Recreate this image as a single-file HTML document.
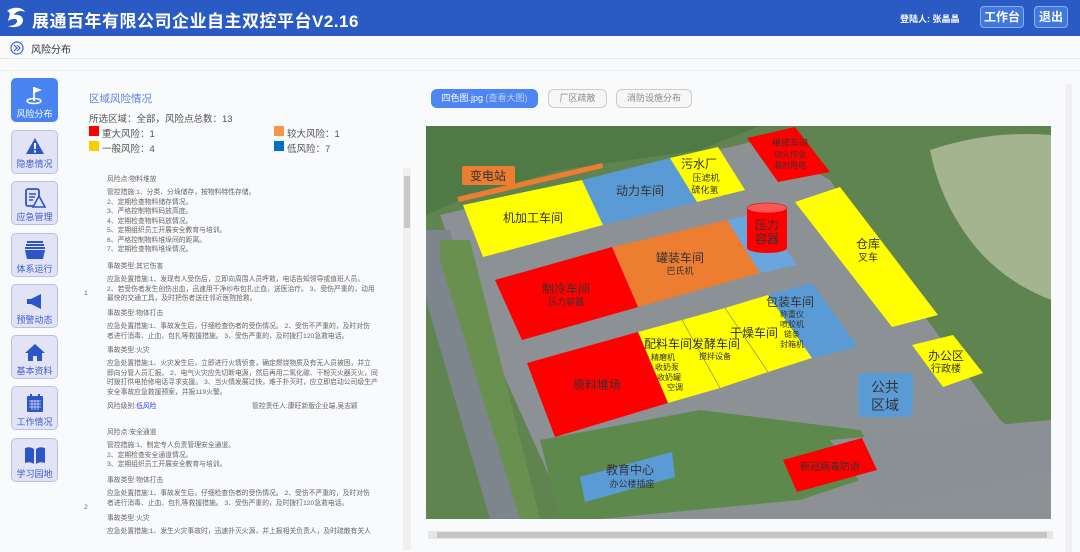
<!DOCTYPE html>
<html><head><meta charset="utf-8">
<style>
*{margin:0;padding:0;box-sizing:border-box}
body{width:1080px;height:552px;overflow:hidden;background:#f9fafc;font-family:"Liberation Sans","Noto Sans CJK SC",sans-serif;position:relative;color:#555}
.hdr{position:absolute;left:0;top:0;width:1080px;height:36px;background:#2a5bc5}
.title{position:absolute;left:32px;top:7px;color:#fff;font-size:17px;font-weight:bold;letter-spacing:0.5px}
.hb{position:absolute;top:6px;height:22px;border:1px solid #8fb0f5;border-radius:4px;background:#4177e0;color:#fff;font-size:12px;line-height:20px;text-align:center;font-weight:bold}
.side{position:absolute;left:11px;width:47px;height:44px;border-radius:5px;background:#e2e4f6;border:1px solid #b9c0e8;text-align:center;color:#3a5ed0;font-size:9px}
.side.on{background:#4a84f2;border-color:#4a84f2;color:#fff}
.side svg{display:block;margin:6px auto 2px}
.t{position:absolute;font-size:6.8px;color:#666;line-height:9.5px;white-space:nowrap}
.btn{position:absolute;top:89px;height:19px;border:1px solid #ccc;border-radius:6px;font-size:9px;color:#888;line-height:17px;text-align:center;background:#f6f6f6}
.sw{position:absolute;width:10px;height:10px}
.lg{position:absolute;font-size:9.5px;color:#555}
</style></head><body>
<div class="hdr"></div>
<svg style="position:absolute;left:3px;top:5px" width="26" height="26" viewBox="0 0 26 26"><path d="M4 6 C10 1 20 2 22 7 C18 5 13 6 11 10 C15 9 20 11 20 15 C20 21 12 24 5 21 C10 21 15 19 14 15 C12 13 8 14 5 16 C6 11 9 8 4 6Z" fill="#fff"/></svg>
<div class="title">展通百年有限公司企业自主双控平台V2.16</div>
<div style="position:absolute;left:900px;top:12px;color:#fff;font-size:9px;font-weight:bold">登陆人: 张晶晶</div>
<div class="hb" style="left:980px;width:44px">工作台</div>
<div class="hb" style="left:1034px;width:34px">退出</div>

<svg style="position:absolute;left:10px;top:41px" width="14" height="14"><circle cx="7" cy="7" r="6" fill="none" stroke="#3a63c8" stroke-width="1.2"/><path d="M4 4l3 3-3 3M7 4l3 3-3 3" fill="none" stroke="#3a63c8" stroke-width="1.2"/></svg>
<div style="position:absolute;left:31px;top:41px;font-size:10px;color:#333">风险分布</div>
<div style="position:absolute;left:0;top:58px;width:1080px;border-top:1px dotted #cfd6e6"></div>
<div style="position:absolute;left:0;top:70px;width:1080px;border-top:1px dotted #dde2ee"></div>

<div class="side on" style="top:78px"><svg width="20" height="20" viewBox="0 0 20 20"><path d="M9 2v14" stroke="#fff" stroke-width="1.8"/><path d="M9 2l8 3-8 3z" fill="#fff"/><ellipse cx="9" cy="16" rx="7" ry="2.5" fill="none" stroke="#fff" stroke-width="1.5"/></svg>风险分布</div>
<div class="side" style="top:130px"><svg width="20" height="18" viewBox="0 0 20 18"><path d="M10 1L19 17H1z" fill="#2c55c8"/><rect x="9" y="6" width="2" height="6" fill="#fff"/><rect x="9" y="13.5" width="2" height="2" fill="#fff"/></svg>隐患情况</div>
<div class="side" style="top:181px"><svg width="22" height="20" viewBox="0 0 22 20"><rect x="2" y="1" width="13" height="17" rx="2" fill="none" stroke="#2c55c8" stroke-width="1.8"/><path d="M5 6h7M5 9h6M5 12h4" stroke="#2c55c8" stroke-width="1.5"/><path d="M15 8l6 11H9z" fill="#e2e4f6" stroke="#2c55c8" stroke-width="1.6"/></svg>应急管理</div>
<div class="side" style="top:233px"><svg width="22" height="20" viewBox="0 0 22 20"><rect x="3" y="1" width="16" height="2" fill="#2c55c8"/><rect x="2" y="4" width="18" height="2" fill="#2c55c8"/><rect x="1" y="7" width="20" height="2" fill="#2c55c8"/><path d="M1 10h20l-2 9H3z" fill="#2c55c8"/></svg>体系运行</div>
<div class="side" style="top:284px"><svg width="22" height="20" viewBox="0 0 22 20"><rect x="3" y="8" width="4" height="5" fill="#2c55c8"/><path d="M7 8l10-5v15l-10-5z" fill="#2c55c8"/></svg>预警动态</div>
<div class="side" style="top:335px"><svg width="22" height="20" viewBox="0 0 22 20"><path d="M11 2L1 11h3v8h5v-5h4v5h5v-8h3z" fill="#2c55c8"/></svg>基本资料</div>
<div class="side" style="top:386px"><svg width="22" height="20" viewBox="0 0 22 20"><rect x="3" y="3" width="16" height="16" rx="1" fill="#2c55c8"/><rect x="6" y="1" width="2" height="4" fill="#2c55c8"/><rect x="14" y="1" width="2" height="4" fill="#2c55c8"/><path d="M5 8h12M5 11h12M5 14h12M8 7v10M11 7v10M14 7v10" stroke="#e2e4f6" stroke-width="0.8"/></svg>工作情况</div>
<div class="side" style="top:438px"><svg width="22" height="20" viewBox="0 0 22 20"><path d="M1 3q5-2 9 1v15q-4-3-9-1z M21 3q-5-2-9 1v15q4-3 9-1z" fill="#2c55c8"/></svg>学习园地</div>

<div style="position:absolute;left:89px;top:91px;font-size:10.5px;color:#5b84e8">区域风险情况</div>
<div class="lg" style="left:89px;top:111px">所选区域：全部，风险点总数：13</div>
<div class="sw" style="left:89px;top:126px;background:#f00"></div><div class="lg" style="left:102px;top:126px">重大风险：1</div>
<div class="sw" style="left:274px;top:126px;background:#f79646"></div><div class="lg" style="left:287px;top:126px">较大风险：1</div>
<div class="sw" style="left:89px;top:141px;background:#fc0"></div><div class="lg" style="left:102px;top:141px">一般风险：4</div>
<div class="sw" style="left:274px;top:141px;background:#0070c0"></div><div class="lg" style="left:287px;top:141px">低风险：7</div>

<div class="t" style="left:107px;top:175px">风险点:物料堆放</div>
<div class="t" style="left:107px;top:188px">管控措施:1、分类、分垛储存，按物料特性存储。<br>2、定期检查物料储存情况。<br>3、严格控制物料码放高度。<br>4、定期检查物料码放情况。<br>5、定期组织员工开展安全教育与培训。<br>6、严格控制物料堆垛间的距离。<br>7、定期检查物料堆垛情况。</div>
<div class="t" style="left:107px;top:262px">事故类型:其它伤害</div>
<div class="t" style="left:107px;top:275px">应急处置措施:1、发现有人受伤后，立即向周围人员呼救，电话告知领导或值班人员。<br>2、若受伤者发生创伤出血，迅速用干净纱布包扎止血，送医治疗。 3、受伤严重的，动用<br>最快的交通工具，及时把伤者送往邻近医院抢救。</div>
<div class="t" style="left:84px;top:289px">1</div>
<div class="t" style="left:107px;top:309px">事故类型:物体打击</div>
<div class="t" style="left:107px;top:322px">应急处置措施:1、事故发生后，仔细检查伤者的受伤情况。 2、受伤不严重的，及时对伤<br>者进行消毒、止血、包扎等救援措施。 3、受伤严重的，及时拨打120急救电话。</div>
<div class="t" style="left:107px;top:346px">事故类型:火灾</div>
<div class="t" style="left:107px;top:359px">应急处置措施:1、火灾发生后，立即进行火情侦查，确定燃烧物质及有无人员被困，并立<br>即向分管人员汇报。 2、电气火灾应先切断电源，然后再用二氧化碳、干粉灭火器灭火，同<br>时拨打供电抢修电话寻求支援。 3、当火情发展过快，难于扑灭时，应立即启动公司级生产<br>安全事故应急救援预案，并报119火警。</div>
<div class="t" style="left:107px;top:402px">风险级别:<span style="color:#2a40ff">低风险</span></div>
<div class="t" style="left:252px;top:402px">管控责任人:康旺新版企业端,吴志颖</div>
<div class="t" style="left:107px;top:428px">风险点:安全通道</div>
<div class="t" style="left:107px;top:441px">管控措施:1、制定专人负责管理安全通道。<br>2、定期检查安全通道情况。<br>3、定期组织员工开展安全教育与培训。</div>
<div class="t" style="left:107px;top:476px">事故类型:物体打击</div>
<div class="t" style="left:107px;top:489px">应急处置措施:1、事故发生后，仔细检查伤者的受伤情况。 2、受伤不严重的，及时对伤<br>者进行消毒、止血、包扎等救援措施。 3、受伤严重的，及时拨打120急救电话。</div>
<div class="t" style="left:84px;top:503px">2</div>
<div class="t" style="left:107px;top:514px">事故类型:火灾</div>
<div class="t" style="left:107px;top:527px">应急处置措施:1、发生火灾事故时，迅速扑灭火源，并上报相关负责人，及时疏散有关人</div>
<div style="position:absolute;left:403px;top:168px;width:8px;height:382px;background:#f0f0f0"></div>
<div style="position:absolute;left:404px;top:176px;width:6px;height:52px;background:#c8c8c8"></div>

<div class="btn" style="left:431px;width:107px;background:#4d86f2;border-color:#4d86f2;color:#fff">四色图.jpg <span style="color:#bcd0f8">(查看大图)</span></div>
<div class="btn" style="left:548px;width:59px">厂区疏散</div>
<div class="btn" style="left:616px;width:76px">消防设施分布</div>
<div style="position:absolute;left:1065px;top:84px;width:7px;height:468px;background:#f0f0f3"></div>

<svg style="position:absolute;left:426px;top:126px" width="625" height="393" viewBox="426 126 625 393" font-family="Liberation Sans,Noto Sans CJK SC,sans-serif">
<rect x="426" y="126" width="625" height="393" fill="#5f8450"/>
<path d="M426 126H760L700 150 560 170 460 200 426 215Z" fill="#4f7a45"/>
<path d="M930 150 Q990 130 1051 135 V300 Q1000 280 970 240 Q940 200 930 150Z" fill="#a3b48f"/>
<path d="M440 215 L760 140 L830 180 L920 310 L1000 420 L1051 460 V519 H590 L560 500 L470 300Z" fill="#8c9196"/>
<path d="M426 230 L450 230 L520 519 H490 L426 300Z" fill="#7d868c"/>
<path d="M440 240 L470 240 L540 519 H520 L440 260Z" fill="#6a9050"/>
<path d="M540 440 L700 410 L860 430 L890 470 L800 500 L600 519 H560Z" fill="#5d8a4c"/>
<path d="M830 440 L1051 420 V470 L880 510Z" fill="#8a9096"/>
<path d="M457 197L602 163L603 168L459 202Z" fill="#ed7d31"/>
<path d="M463 205L582 180L603 225L483 257Z" fill="#ff0"/>
<path d="M582 180L670 158L697 202L603 225Z" fill="#5b9bd5"/>
<path d="M670 158L718 147L745 190L697 202Z" fill="#ff0"/>
<path d="M747 138L795 127L830 172L778 182Z" fill="#f00"/>
<path d="M727 220L760 214L797 265L760 273Z" fill="#6aa6de"/>
<path d="M612 247L727 220L760 273L638 307Z" fill="#ed7d31"/>
<path d="M495 280L612 247L638 307L522 340Z" fill="#f00"/>
<path d="M795 202L840 187L938 315L892 327Z" fill="#ff0"/>
<path d="M768 295L812 283L858 347L812 358Z" fill="#5b9bd5"/>
<path d="M725 308L768 295L812 358L768 372Z" fill="#ff0"/>
<path d="M682 320L725 308L768 372L720 388Z" fill="#ff0"/>
<path d="M638 332L682 320L720 388L668 403Z" fill="#ff0"/>
<path d="M725 308L768 372M682 320L720 388" stroke="#777" stroke-width="0.6"/>
<path d="M527 363L638 332L668 403L555 437Z" fill="#f00"/>
<path d="M912 345L953 335L983 373L943 387Z" fill="#ff0"/>
<rect x="858" y="373" width="55" height="44" rx="6" fill="#5b9bd5"/>
<path d="M783 460L862 438L877 470L797 492Z" fill="#f00"/>
<path d="M580 477L672 452L675 477L585 502Z" fill="#5b9bd5"/>
<path d="M747 208V248A20 5 0 0 0 787 248V208Z" fill="#f00"/>
<ellipse cx="767" cy="208" rx="20" ry="5" fill="#f55" stroke="#c00" stroke-width="0.5"/>
<rect x="462" y="166" width="53" height="19" rx="2" fill="#ed7d31"/>
<g fill="#333" font-size="12" text-anchor="middle">
<text x="488" y="180">变电站</text>
<text x="533" y="222">机加工车间</text>
<text x="640" y="195">动力车间</text>
<text x="699" y="168">污水厂</text>
<text x="706" y="181" font-size="9">压滤机</text>
<text x="705" y="193" font-size="9">硫化氢</text>
<text x="790" y="146" font-size="9">维修车间</text>
<text x="790" y="157" font-size="8">动火作业</text>
<text x="790" y="168" font-size="8">临时用电</text>
<text x="767" y="229">压力</text>
<text x="767" y="243">容器</text>
<text x="680" y="262">罐装车间</text>
<text x="680" y="274" font-size="9">巴氏机</text>
<text x="566" y="293">制冷车间</text>
<text x="566" y="305" font-size="9">压力容器</text>
<text x="868" y="248">仓库</text>
<text x="868" y="261" font-size="10">叉车</text>
<text x="790" y="306">包装车间</text>
<text x="792" y="317" font-size="8">称重仪</text>
<text x="792" y="327" font-size="8">喷胶机</text>
<text x="792" y="337" font-size="8">链条</text>
<text x="792" y="347" font-size="8">封箱机</text>
<text x="754" y="337">干燥车间</text>
<text x="716" y="348">发酵车间</text>
<text x="715" y="359" font-size="8">搅拌设备</text>
<text x="668" y="348">配料车间</text>
<text x="663" y="360" font-size="8">精磨机</text>
<text x="667" y="370" font-size="8">收奶泵</text>
<text x="669" y="380" font-size="8">收奶罐</text>
<text x="675" y="390" font-size="8">空调</text>
<text x="597" y="389">原料堆场</text>
<text x="946" y="360">办公区</text>
<text x="946" y="372" font-size="10">行政楼</text>
<text x="885" y="392" font-size="14">公共</text>
<text x="885" y="410" font-size="14">区域</text>
<text x="830" y="470" font-size="10">新冠病毒防治</text>
<text x="630" y="474">教育中心</text>
<text x="632" y="487" font-size="9">办公楼插座</text>
</g>
</svg>
<div style="position:absolute;left:428px;top:531px;width:625px;height:8px;background:#e6e6e6"></div>
<div style="position:absolute;left:437px;top:532px;width:610px;height:6px;background:#c4c4c4"></div>
</body></html>
